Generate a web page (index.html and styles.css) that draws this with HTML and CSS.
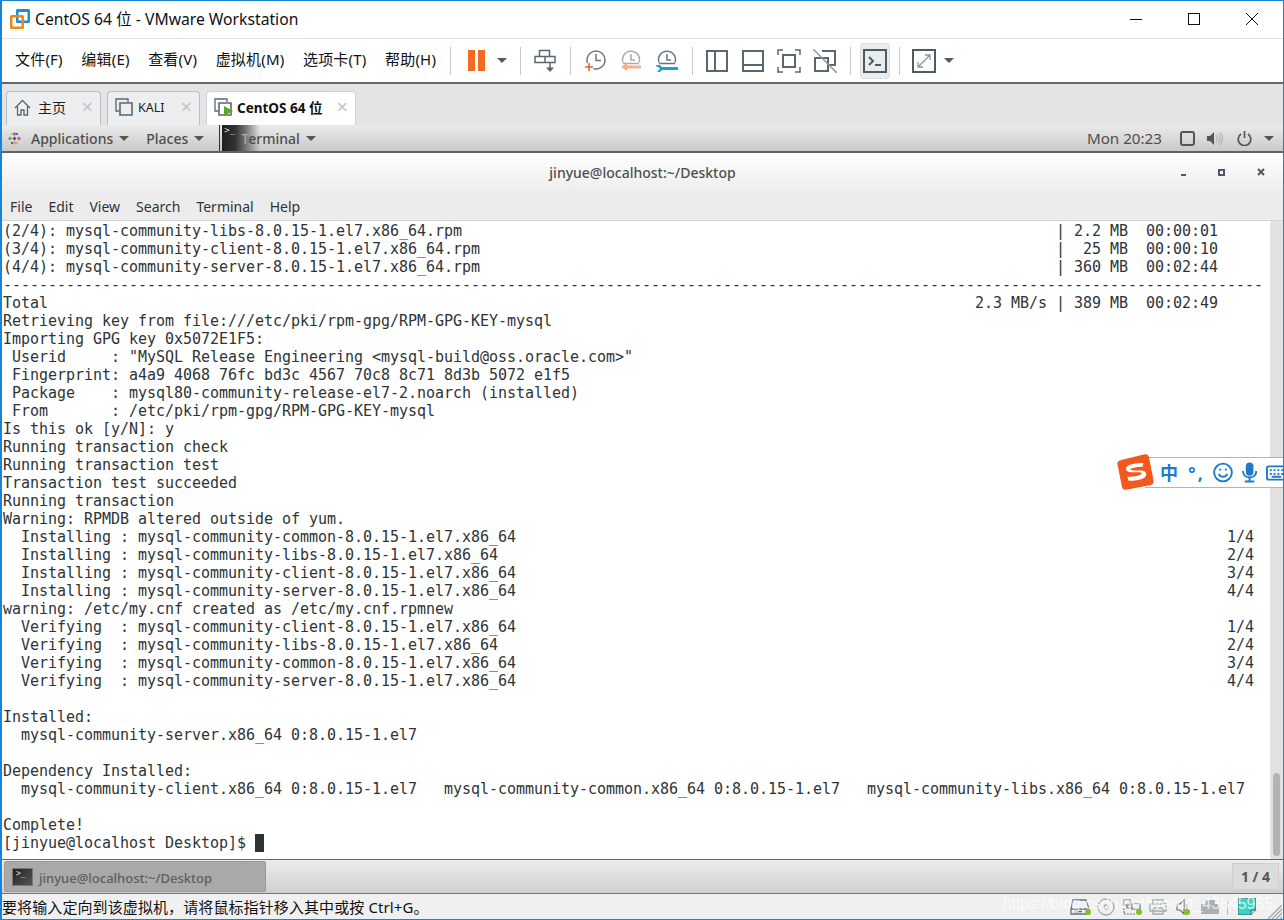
FILE: index.html
```html
<!DOCTYPE html>
<html lang="zh">
<head>
    <meta charset="UTF-8">
    <meta name="viewport" content="width=device-width, initial-scale=1.0">
    <title>CentOS 64 位 - VMware Workstation</title>
    <link rel="stylesheet" href="styles.css">
</head>
<body>
<div class="vm-window">

    <!-- Title bar -->
    <div class="title-bar">
        <svg class="vm-logo" width="20" height="20" viewBox="0 0 20 20">
            <path d="M6 1.500a1.500 1.500 0 0 1 1.500-1.500h11a1.500 1.500 0 0 1 1.500 1.500v11a1.500 1.500 0 0 1-1.500 1.500h-11a1.500 1.500 0 0 1-1.500-1.500zM8.500 3v8.500h9v-8.500z" fill="#1d8fd0"/>
            <path d="M0 7.500a1.500 1.500 0 0 1 1.500-1.500h11a1.500 1.500 0 0 1 1.500 1.500v11a1.500 1.500 0 0 1-1.500 1.500h-11a1.500 1.500 0 0 1-1.500-1.500zM2.500 8.500v9h9v-9z" fill="#f0870f"/>
        </svg>
        <span class="title-text">CentOS 64 位 - VMware Workstation</span>
        <div class="win-controls">
            <svg width="14" height="14" viewBox="0 0 14 14"><path d="M1 7.500h12" stroke="#111" fill="none"/></svg>
            <svg width="14" height="14" viewBox="0 0 14 14"><rect x="1.500" y="1.500" width="11" height="11" stroke="#111" fill="none"/></svg>
            <svg width="14" height="14" viewBox="0 0 14 14"><path d="M1 1l12 12M13 1L1 13" stroke="#111" fill="none"/></svg>
        </div>
    </div>

    <!-- Menu and toolbar -->
    <div class="toolbar">
        <ul class="vm-menu">
            <li>文件(F)</li>
            <li>编辑(E)</li>
            <li>查看(V)</li>
            <li>虚拟机(M)</li>
            <li>选项卡(T)</li>
            <li>帮助(H)</li>
        </ul>
        <span class="sep sep-menu"></span>
        <div class="tool pause-tool">
            <svg width="17" height="21" viewBox="0 0 17 21"><path d="M0 0h7v21H0zM10 0h7v21h-7z" fill="#f26b21"/></svg>
        </div>
        <span class="caret tool-caret"></span>
        <span class="sep sep-a"></span>
        <div class="tool">
            <svg width="22" height="24" viewBox="0 0 22 24" fill="none" stroke="#5b6770" stroke-width="1.500"><path d="M5.500 1.500h10v6h-10zM1 7.500h20v6H1zM11 7.500v6M16 14v5"/><path d="M12 18.500h8L16 23z" fill="#5b6770" stroke="none"/></svg>
        </div>
        <span class="sep"></span>
        <div class="tool">
            <svg width="22" height="22" viewBox="0 0 22 22" fill="none" stroke="#6a757c" stroke-width="1.500"><path d="M3.500 13A9 9 0 1 1 9.500 18.700M12 4v6.500h5"/><path d="M1 17h8M5 13v8" stroke="#e2622a"/></svg>
        </div>
        <div class="tool">
            <svg width="22" height="22" viewBox="0 0 22 22" fill="none" stroke="#a3abb0" stroke-width="1.500"><path d="M3 12.500a8.500 8.500 0 1 1 16 0M3 13.500h16M11 4v6h4"/><path d="M21 15.500H7v-2.500l-6 4 6 4v-2.500h14z" fill="#f7ae8f" stroke="none"/></svg>
        </div>
        <div class="tool">
            <svg width="22" height="22" viewBox="0 0 22 22" fill="none" stroke="#6a757c" stroke-width="1.500"><path d="M3 12.500a8.500 8.500 0 1 1 16 0M3 13.500h16M11 4v6h4"/><path d="M0 15h4l2 2h16v3H6l-2 2H1l3-3.500-1.500-1.500L1 17z" fill="#17a3c9" stroke="none"/></svg>
        </div>
        <span class="sep"></span>
        <div class="tool">
            <svg width="22" height="22" viewBox="0 0 22 22" fill="none" stroke="#5b6770" stroke-width="2"><path d="M1 1h20v20H1zM9 1v20"/></svg>
        </div>
        <div class="tool">
            <svg width="22" height="22" viewBox="0 0 22 22" fill="none" stroke="#5b6770" stroke-width="2"><path d="M1 1h20v20H1zM1 15h20"/></svg>
        </div>
        <div class="tool">
            <svg width="24" height="24" viewBox="0 0 24 24" fill="none" stroke="#5b6770" stroke-width="1.500"><path d="M1 6V1h5M18 1h5v5M23 18v5h-5M6 23H1v-5"/><path d="M6 6h12v12H6z" stroke-width="2"/></svg>
        </div>
        <div class="tool">
            <svg width="24" height="24" viewBox="0 0 24 24" fill="none" stroke="#5b6770" stroke-width="2"><path d="M9 2h13v14h-6M2 9h13v13H2z"/><path d="M0 0l24 24" stroke="#8d969c" stroke-width="1.500"/></svg>
        </div>
        <span class="sep sep-b"></span>
        <div class="tool-active">
            <svg width="24" height="24" viewBox="0 0 24 24" fill="none" stroke="#4f5b63" stroke-width="2"><path d="M1 1h22v22H1zM6 8l4 4-4 4M12 16h6"/></svg>
        </div>
        <span class="sep sep-c"></span>
        <div class="tool">
            <svg width="24" height="24" viewBox="0 0 24 24" fill="none" stroke="#4f5b63" stroke-width="2"><path d="M1 1h22v22H1z"/><path d="M6 18L18 6M13 6h5v5M6 13v5h5" stroke="#8d969c" stroke-width="1.300"/></svg>
        </div>
        <span class="caret end-caret"></span>
    </div>

    <!-- Tabs -->
    <div class="tabs">
        <div class="tab tab-home">
            <svg width="17" height="17" viewBox="0 0 17 17" fill="none" stroke="#5b6770" stroke-width="1.300"><path d="M1 9l7.500-7.500L16 9M3.500 7.500V16h3.500v-5h3v5h3.500V7.500"/></svg>
            <span class="tab-name">主页</span>
            <span class="tab-close">×</span>
        </div>
        <div class="tab tab-kali">
            <svg width="18" height="18" viewBox="0 0 18 18" fill="none" stroke="#5b6770" stroke-width="1.300"><path d="M4 13H1V1h12v3"/><path d="M5 5h12v12H5z" stroke-width="1.600"/></svg>
            <span class="tab-name">KALI</span>
            <span class="tab-close">×</span>
        </div>
        <div class="tab tab-active">
            <svg width="19" height="18" viewBox="0 0 19 18" fill="none" stroke="#5b6770" stroke-width="1.300"><path d="M4 13H1V1h12v3"/><path d="M5 5h12v12H5z" stroke-width="1.600"/><path d="M10 8l9 5-9 5z" fill="#5da81f" stroke="none"/></svg>
            <span class="tab-name">CentOS 64 位</span>
            <span class="tab-close">×</span>
        </div>
    </div>

    <!-- Gnome top panel -->
    <div class="gnome-panel">
        <svg class="gnome-foot" width="13" height="13" viewBox="0 0 13 13">
            <path d="M6.500 0l2 2-2 2-2-2z" fill="#a5609d"/>
            <path d="M2 4.500l2 2-2 2-2-2z" fill="#7ba33f"/>
            <path d="M11 4.500l2 2-2 2-2-2z" fill="#b55b9c"/>
            <path d="M6.500 4.500l2 2-2 2-2-2z" fill="#4b4f8c"/>
            <path d="M6.500 9l2 2-2 2-2-2z" fill="#e6a437"/>
            <path d="M3 1h2v2H3zM8 10h2v2H8z" fill="#e7b23f"/>
            <path d="M8 1h2v2H8zM3 10h2v2H3z" fill="#8e4f92"/>
        </svg>
        <span class="panel-item">Applications</span>
        <span class="panel-caret"></span>
        <span class="panel-item places">Places</span>
        <span class="panel-caret"></span>
        <span class="thumb-line"></span>
        <div class="thumb">
            <span class="thumb-prompt">&gt;_</span>
        </div>
        <span class="panel-item thumb-label"><span class="thumb-t">T</span>erminal</span>
        <span class="panel-caret"></span>
        <span class="panel-clock">Mon 20:23</span>
        <svg width="15" height="15" viewBox="0 0 15 15" fill="none" stroke="#555" stroke-width="2"><rect x="1" y="1" width="13" height="13" rx="2"/></svg>
        <svg class="panel-sound" width="16" height="15" viewBox="0 0 16 15"><path d="M0 5h3l4-4v13l-4-4H0z" fill="#555"/><path d="M9 4c1.500 2 1.500 5 0 7M11 2.500c2.500 3 2.500 7 0 10M13 1c3 4 3 9 0 13" stroke="#aaa" fill="none"/></svg>
        <svg class="panel-power" width="15" height="15" viewBox="0 0 15 15" fill="none" stroke="#555" stroke-width="1.700"><path d="M4 3a6.300 6.300 0 1 0 7 0M7.500 0v7"/></svg>
        <span class="panel-caret panel-caret-end"></span>
    </div>

    <!-- Terminal window -->
    <div class="term-titlebar">
        <span class="term-title">jinyue@localhost:~/Desktop</span>
        <div class="term-controls">
            <span class="ctl-min"></span>
            <span class="ctl-max"></span>
            <svg width="8" height="8" viewBox="0 0 8 8"><path d="M1 1l6 6M7 1L1 7" stroke="#4d5a66" stroke-width="2"/></svg>
        </div>
    </div>
    <ul class="term-menu">
        <li>File</li>
        <li>Edit</li>
        <li>View</li>
        <li>Search</li>
        <li>Terminal</li>
        <li>Help</li>
    </ul>
    <div class="term-body">
<pre class="term-text">(2/4): mysql-community-libs-8.0.15-1.el7.x86_64.rpm                                                                  | 2.2 MB  00:00:01
(3/4): mysql-community-client-8.0.15-1.el7.x86_64.rpm                                                                |  25 MB  00:00:10
(4/4): mysql-community-server-8.0.15-1.el7.x86_64.rpm                                                                | 360 MB  00:02:44
--------------------------------------------------------------------------------------------------------------------------------------------
Total                                                                                                       2.3 MB/s | 389 MB  00:02:49
Retrieving key from file:///etc/pki/rpm-gpg/RPM-GPG-KEY-mysql
Importing GPG key 0x5072E1F5:
 Userid     : "MySQL Release Engineering &lt;mysql-build@oss.oracle.com&gt;"
 Fingerprint: a4a9 4068 76fc bd3c 4567 70c8 8c71 8d3b 5072 e1f5
 Package    : mysql80-community-release-el7-2.noarch (installed)
 From       : /etc/pki/rpm-gpg/RPM-GPG-KEY-mysql
Is this ok [y/N]: y
Running transaction check
Running transaction test
Transaction test succeeded
Running transaction
Warning: RPMDB altered outside of yum.
  Installing : mysql-community-common-8.0.15-1.el7.x86_64                                                                               1/4
  Installing : mysql-community-libs-8.0.15-1.el7.x86_64                                                                                 2/4
  Installing : mysql-community-client-8.0.15-1.el7.x86_64                                                                               3/4
  Installing : mysql-community-server-8.0.15-1.el7.x86_64                                                                               4/4
warning: /etc/my.cnf created as /etc/my.cnf.rpmnew
  Verifying  : mysql-community-client-8.0.15-1.el7.x86_64                                                                               1/4
  Verifying  : mysql-community-libs-8.0.15-1.el7.x86_64                                                                                 2/4
  Verifying  : mysql-community-common-8.0.15-1.el7.x86_64                                                                               3/4
  Verifying  : mysql-community-server-8.0.15-1.el7.x86_64                                                                               4/4

Installed:
  mysql-community-server.x86_64 0:8.0.15-1.el7

Dependency Installed:
  mysql-community-client.x86_64 0:8.0.15-1.el7   mysql-community-common.x86_64 0:8.0.15-1.el7   mysql-community-libs.x86_64 0:8.0.15-1.el7

Complete!
[jinyue@localhost Desktop]$ <span class="cursor"></span></pre>
        <div class="scroll-track"><div class="scroll-thumb"></div></div>
    </div>

    <!-- Gnome window list -->
    <div class="taskbar">
        <div class="task-btn">
            <div class="task-icon">&gt;_</div>
            <span class="task-name">jinyue@localhost:~/Desktop</span>
        </div>
        <div class="pager">1 / 4</div>
    </div>

    <!-- VMware status bar -->
    <div class="status-bar">
        <span class="status-text">要将输入定向到该虚拟机，请将鼠标指针移入其中或按 Ctrl+G。</span>
        <div class="status-icons">
            <svg width="20" height="16" viewBox="0 0 20 16" fill="none" stroke="#66727a" stroke-width="1.300"><path d="M3 1h13l3 9H1zM1 10h18v5H1zM4 12.500h8"/></svg>
            <span class="dot dot-a"></span>
            <svg class="st-cd" width="18" height="18" viewBox="0 0 18 18" fill="none" stroke="#a3abb0" stroke-width="1.300"><circle cx="9" cy="9" r="8"/><circle cx="9" cy="9" r="2"/></svg>
            <svg class="st-net" width="18" height="16" viewBox="0 0 18 16" fill="none" stroke="#66727a" stroke-width="1.200"><path d="M1 1h6v5H1zM9 5h8v5H9zM4 6v3h5" /><path d="M1 15h12M1 9v6" stroke-dasharray="2 1"/></svg>
            <span class="dot dot-b"></span>
            <svg class="st-print" width="18" height="16" viewBox="0 0 18 16" fill="none" stroke="#a3abb0" stroke-width="1.300"><path d="M4 5V1h10v4M1 5h16v7H1zM4 9h10v6H4z"/></svg>
            <svg class="st-sound" width="13" height="16" viewBox="0 0 13 16" fill="none" stroke="#66727a" stroke-width="1.200"><path d="M1 5h3l4-4v14l-4-4H1zM10 5c1 2 1 4 0 6"/></svg>
            <span class="dot dot-c"></span>
            <svg class="st-usb" width="18" height="14" viewBox="0 0 18 14"><path d="M0 4h18v10H0zM4 0h10v4H4z" fill="#a9afb3"/></svg>
            <span class="st-sep"></span>
            <svg class="st-note" width="18" height="17" viewBox="0 0 18 17"><path d="M0 0h18v12l-5 5H0z" fill="#35d6c2" stroke="#4d5a60"/><path d="M13 17v-5h5" fill="#9ee" stroke="#4d5a60"/></svg>
            <svg class="st-grip" width="14" height="14" viewBox="0 0 14 14" stroke="#a8a8a8" stroke-width="1.300"><path d="M14 0L0 14M14 4L4 14M14 8l-6 6M14 12l-2 2"/></svg>
        </div>
    </div>

    <!-- Watermark burnt into the screenshot -->
    <span class="watermark">https://blog.csdn.net/weixin_43845935</span>

    <!-- Sogou input method bar -->
    <div class="ime-bar">
        <svg class="ime-logo" width="36" height="36" viewBox="0 0 36 36">
            <path d="M6 5l23-4c2-.3 3.500.7 4 3l3 24c.3 2-.7 3.500-3 4L8 35c-2 .3-3.500-.7-4-3L1 9c-.3-2 2-3.600 5-4z" fill="#f2591c"/>
            <path d="M27 9.500c-6-.5-13 0-16 2-3 2-2 5 1 6 4 1 9 .5 12 1.500 1.500.7 0 2-2 2.500-4 .8-8 1-12 .8l1 4c5 .3 12 0 16-2 3-2 3-6-1-7-4-1-9-.5-12-1.500-1-.6 0-1.600 2-2 3-.6 7-.7 10-.5z" fill="#fff"/>
        </svg>
        <span class="ime-zh">中</span>
        <span class="ime-punct">°,</span>
        <svg class="ime-smile" width="21" height="21" viewBox="0 0 21 21" fill="none" stroke="#1f7bc9" stroke-width="2"><circle cx="10.500" cy="10.500" r="9.300"/><path d="M6 12c1.500 4 7.500 4 9 0M7.500 6.500v2M13.500 6.500v2"/></svg>
        <svg class="ime-mic" width="16" height="21" viewBox="0 0 16 21" fill="#1f7bc9"><rect x="4" y="0" width="8" height="14" rx="4"/><path d="M1 9c0 9 14 9 14 0" fill="none" stroke="#1f7bc9" stroke-width="2"/><path d="M7 15h2v4h4v2H3v-2h4z"/></svg>
        <svg class="ime-keys" width="20" height="16" viewBox="0 0 20 16"><rect x="1" y="1" width="22" height="14" rx="2" fill="#fff" stroke="#1f7bc9" stroke-width="2"/><path d="M4 4h2v2H4zM8 4h2v2H8zM12 4h2v2h-2zM16 4h2v2h-2zM4 8h2v2H4zM8 8h2v2H8zM12 8h2v2h-2zM16 8h2v2h-2zM6 11h10v2H6z" fill="#1f7bc9"/></svg>
    </div>
</div>
</body>
</html>
```

FILE: styles.css
```css
* {
    box-sizing: border-box;
}

body {
    margin: 0;
    padding: 0;
    background: #fff;
    font-family: 'Noto Sans', 'Noto Sans CJK SC', sans-serif;
    overflow: hidden;
}

ul {
    list-style-type: none;
    margin: 0;
    padding: 0;
}

.vm-window {
    position: relative;
    width: 1284px;
    height: 920px;
    display: flex;
    flex-direction: column;
    overflow: hidden;
    border-top: 1px solid #1883d7;
    border-left: 2px solid #1883d7;
    border-right: 1px solid #1883d7;
    border-bottom: 1px solid #1883d7;
}

/* Title bar */
.title-bar {
    height: 38px;
    flex: none;
    display: flex;
    align-items: center;
    padding-left: 8px;
    padding-bottom: 2px;
    border-bottom: 1px solid #e3e3e3;
    background: #fff;
}

.vm-logo {
    margin-right: 5px;
}

.title-text {
    font-size: 15.7px;
    color: #111;
}

.win-controls {
    margin-left: auto;
    display: flex;
    gap: 44px;
    padding-right: 24px;
}

/* Menu and toolbar */
.toolbar {
    height: 45px;
    flex: none;
    display: flex;
    align-items: center;
    padding-left: 13px;
    background: #fff;
    border-bottom: 2px solid #666a6d;
}

.vm-menu {
    display: flex;
    gap: 18.5px;
    margin-bottom: 5px;
    font-size: 15px;
    letter-spacing: 0.2px;
    color: #111;
}

.sep {
    width: 1px;
    height: 28px;
    margin: 0 6px 0 7px;
    background: #c8c8c8;
}

.sep-menu {
    margin: 0 13px 0 14px;
}

.sep-a {
    margin: 0 6px 0 12px;
}

.sep-b {
    margin: 0 9px 0 7px;
}

.sep-c {
    margin: 0 6px 0 9px;
}

.tool {
    width: 36px;
    display: flex;
    justify-content: center;
}

.pause-tool {
    width: 17px;
    margin-left: 4px;
}

.tool-active {
    width: 30px;
    height: 36px;
    display: flex;
    align-items: center;
    justify-content: center;
    background: #e9ecec;
    border: 1px solid #dcdfe0;
    border-radius: 3px;
}

.caret {
    width: 0;
    height: 0;
    border-left: 5px solid transparent;
    border-right: 5px solid transparent;
    border-top: 5px solid #4f5b63;
}

.tool-caret {
    margin-left: 12px;
    margin-right: 1px;
}

.end-caret {
    margin-left: 2px;
}

/* Tabs */
.tabs {
    height: 41px;
    flex: none;
    display: flex;
    align-items: flex-end;
    gap: 6px;
    padding-left: 4px;
    background: #e3e4e6;
}

.tab {
    height: 34px;
    display: flex;
    align-items: center;
    padding-left: 7px;
    padding-bottom: 3px;
    border: 1px solid #b9bdc1;
    border-bottom: none;
    border-radius: 4px 4px 0 0;
    background: #eceef0;
    font-size: 14px;
    color: #222;
}

.tab-home {
    width: 95px;
}

.tab-kali {
    width: 93px;
}

.tab-active {
    width: 150px;
    background: #fff;
    border-color: #d0d3d6;
    font-weight: bold;
    font-size: 13.5px;
    color: #111;
}

.tab-name {
    margin-left: 7px;
}

.tab-kali .tab-name {
    margin-left: 5px;
    font-size: 12.5px;
}

.tab-active .tab-name {
    margin-left: 4px;
}

.tab-close {
    margin-left: auto;
    padding-right: 7px;
    font-size: 20px;
    font-weight: normal;
    line-height: 1;
    color: #c0c4c7;
}

/* Gnome top panel */
.gnome-panel {
    height: 28px;
    flex: none;
    display: flex;
    align-items: center;
    padding-left: 6px;
    padding-right: 9px;
    background: linear-gradient(#ebebeb, #c9c9c9);
    border-bottom: 2px solid #5f6365;
    color: #4e4e4e;
    font-size: 14px;
}

.gnome-foot {
    margin-right: 10px;
}

.panel-item {
    font-weight: 500;
}

.places {
    margin-left: 17px;
}

.panel-caret {
    width: 0;
    height: 0;
    margin-left: 6px;
    border-left: 5px solid transparent;
    border-right: 5px solid transparent;
    border-top: 5px solid #555;
}

.thumb-line {
    width: 1px;
    height: 26px;
    margin-left: 15px;
    background: #333;
}

.thumb {
    width: 38px;
    height: 26px;
    margin-left: 2px;
    background: linear-gradient(90deg, #1f1f1f 0, #333 35%, #6e6e6e 60%, rgba(180, 180, 180, 0) 100%);
    color: #ddd;
    font-size: 9px;
    line-height: 9px;
    padding-left: 2px;
}

.thumb-prompt {
    font-family: 'DejaVu Sans Mono', monospace;
}

.thumb-label {
    margin-left: -19px;
}

.thumb-t {
    color: #a5a5a5;
}

.panel-clock {
    margin-left: auto;
    margin-right: 18px;
    font-size: 15.2px;
}

.panel-sound {
    margin-left: 12px;
}

.panel-power {
    margin-left: 14px;
}

.panel-caret-end {
    margin-left: 12px;
}

/* Terminal window */
.term-titlebar {
    height: 42px;
    flex: none;
    display: flex;
    align-items: center;
    justify-content: center;
    position: relative;
    background: linear-gradient(#fff, #ececec);
}

.term-title {
    font-size: 14px;
    font-weight: 500;
    color: #4e4e4e;
    margin-top: -3px;
}

.term-controls {
    position: absolute;
    right: 18px;
    top: 15px;
    display: flex;
    align-items: center;
    gap: 32px;
}

.ctl-min {
    width: 5px;
    height: 2px;
    margin-top: 6px;
    background: #4d5a66;
}

.ctl-max {
    width: 7px;
    height: 7px;
    border: 2px solid #4d5a66;
}

.term-menu {
    height: 26px;
    flex: none;
    display: flex;
    align-items: center;
    gap: 16px;
    padding-left: 8px;
    padding-bottom: 2px;
    background: #ececec;
    border-bottom: 1px solid #d4d4d4;
    color: #2e3436;
    font-size: 14px;
}

.term-body {
    height: 639px;
    flex: none;
    display: flex;
    justify-content: space-between;
    background: #fff;
    border-bottom: 1px solid #666;
}

.term-text {
    margin: 0;
    padding: 1px 0 0 1px;
    font-family: 'DejaVu Sans Mono', monospace;
    font-size: 15px;
    line-height: 18px;
    letter-spacing: -0.03px;
    color: #2e3436;
}

.cursor {
    display: inline-block;
    width: 9px;
    height: 18px;
    vertical-align: top;
    background: #2e3436;
}

.scroll-track {
    width: 13px;
    flex: none;
    padding: 552px 3px 2px 3px;
    background: #e2e2e2;
}

.scroll-thumb {
    height: 83px;
    border-radius: 4px;
    background: #b3b3b3;
}

/* Gnome window list */
.taskbar {
    height: 34px;
    flex: none;
    display: flex;
    align-items: center;
    justify-content: space-between;
    padding: 0 4px 0 2px;
    background: linear-gradient(#ececec, #cfcfcf);
    border-bottom: 1px solid #777;
}

.task-btn {
    width: 262px;
    height: 31px;
    display: flex;
    align-items: center;
    gap: 6px;
    padding-left: 7px;
    background: #a9a9a9;
    border: 1px solid #999;
    border-radius: 2px;
    color: #5e5e5e;
    font-size: 13px;
    font-weight: 500;
}

.task-name {
    margin-top: 2px;
}

.task-icon {
    width: 21px;
    height: 18px;
    padding-left: 3px;
    background: linear-gradient(135deg, #222, #555);
    border: 1px solid #777;
    color: #ddd;
    font-family: 'DejaVu Sans Mono', monospace;
    font-size: 8px;
    line-height: 10px;
}

.pager {
    width: 47px;
    height: 27px;
    display: flex;
    align-items: center;
    justify-content: center;
    background: #dcdcdc;
    border: 1px solid #cfcfcf;
    color: #555;
    font-size: 14px;
    font-weight: bold;
}

/* VMware status bar */
.status-bar {
    flex: 1;
    display: flex;
    align-items: center;
    justify-content: space-between;
    background: #f0f0f0;
    color: #111;
    font-size: 15px;
    letter-spacing: 0.1px;
}

.status-icons {
    position: relative;
    display: flex;
    align-items: center;
    height: 100%;
    padding-right: 1px;
}

.dot {
    width: 6px;
    height: 6px;
    margin: 10px 0 0 -5px;
    border-radius: 50%;
    background: #84c21a;
}

.st-cd {
    margin-left: 6px;
}

.st-net {
    margin-left: 8px;
}

.st-print {
    margin-left: 7px;
}

.st-sound {
    margin-left: 9px;
}

.st-usb {
    margin-left: 11px;
}

.st-sep {
    width: 1px;
    height: 16px;
    margin-left: 8px;
    background: #bbb;
}

.st-note {
    margin-left: 10px;
}

.st-grip {
    margin-left: 12px;
    margin-top: 10px;
}

.watermark {
    position: absolute;
    right: 10px;
    bottom: 6px;
    font-family: 'Liberation Sans', sans-serif;
    color: rgba(255, 255, 255, 0.75);
    font-size: 15.9px;
}

/* Sogou input method bar */
.ime-bar {
    position: absolute;
    left: 1143px;
    top: 456px;
    width: 140px;
    height: 31px;
    display: flex;
    align-items: center;
    background: #fff;
    border-top: 1px solid #b3b3b3;
    border-bottom: 1px solid #b3b3b3;
    color: #1f7bc9;
}

.ime-logo {
    position: absolute;
    left: -28px;
    top: -4px;
    transform: rotate(-4deg);
}

.ime-zh {
    margin-left: 15px;
    font-size: 18px;
    font-weight: bold;
    line-height: 1;
}

.ime-punct {
    margin-left: 10px;
    font-size: 18px;
    font-weight: bold;
    line-height: 1;
    letter-spacing: 2px;
}

.ime-smile {
    margin-left: 8px;
}

.ime-mic {
    margin-left: 9px;
}

.ime-keys {
    margin-left: 9px;
}
```
